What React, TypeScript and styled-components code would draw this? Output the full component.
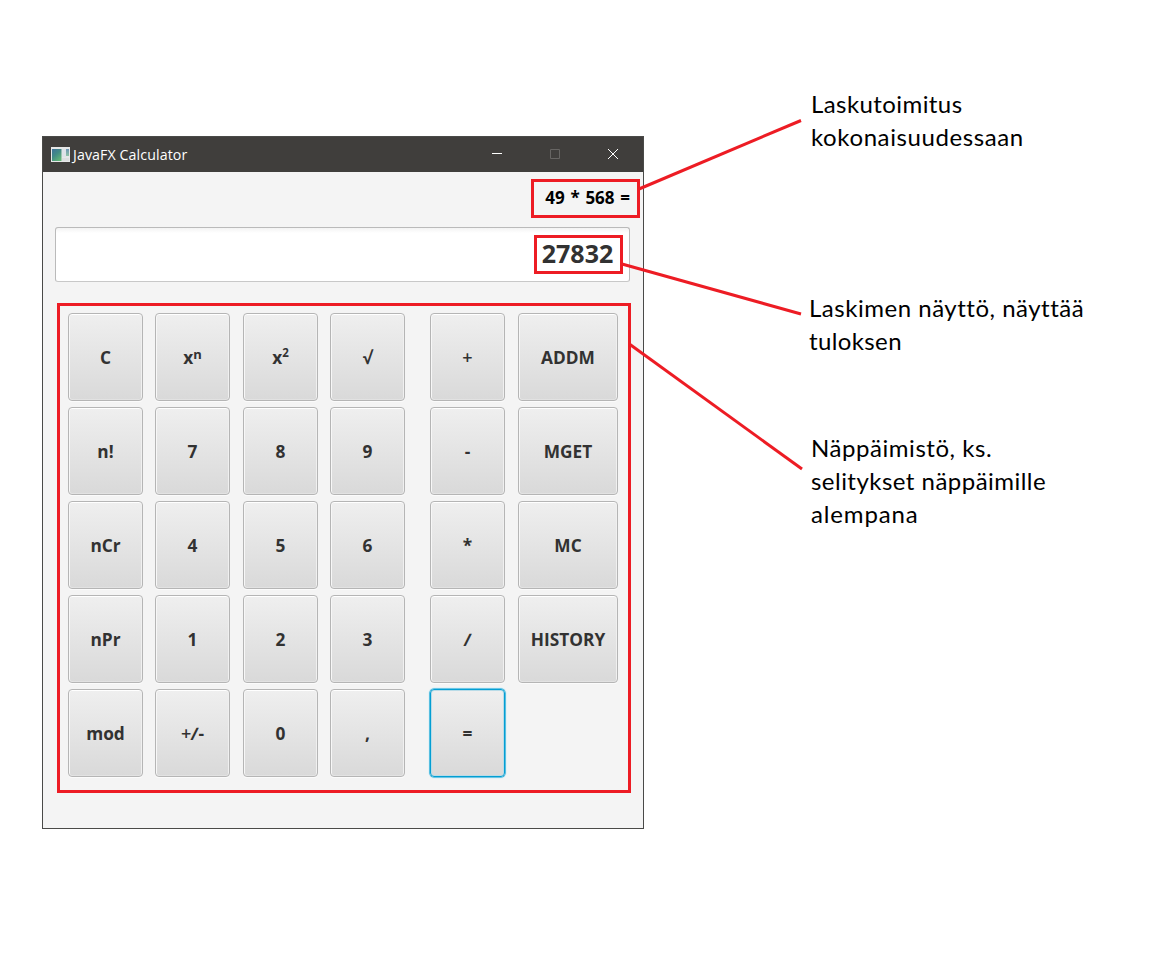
import React from 'react';
import styled, { createGlobalStyle } from 'styled-components';

const RED = '#ed1c24';
const UI = '"Open Sans", "Noto Sans", sans-serif';

const GlobalStyle = createGlobalStyle`
  *, *::before, *::after { box-sizing: border-box; }
  body { margin: 0; background: #fff; }
`;

const Page = styled.main`
  position: relative;
  display: flex;
  align-items: flex-start;
  width: 1154px;
  height: 957px;
  overflow: hidden;
  background: #fff;
`;

const Window = styled.section`
  display: flex;
  flex-direction: column;
  flex: none;
  width: 602px;
  height: 693px;
  margin: 136px 0 0 42px;
  border: 1px solid #4a4a48;
  background: #f4f4f4;
  font-family: ${UI};
`;

const TitleBar = styled.header`
  display: flex;
  align-items: center;
  flex: none;
  height: 35px;
  padding: 0 1px 1px 8px;
  background: #403e3c;
  color: #fff;
`;

const Title = styled.h1`
  flex: 1;
  margin: 0 0 0 3px;
  padding-top: 2px;
  font-size: 14.2px;
  font-weight: 400;
  line-height: 20px;
  letter-spacing: 0.1px;
`;

const WindowButton = styled.span`
  display: flex;
  align-items: center;
  justify-content: center;
  width: 58px;
  height: 34px;
`;

const ExpressionRow = styled.div`
  display: flex;
  justify-content: flex-end;
  flex: none;
  height: 55px;
  padding: 7px 3px 0 0;
`;

const Expression = styled.output`
  width: 109px;
  height: 39px;
  padding-right: 7px;
  border: 3px solid ${RED};
  color: #000;
  font-size: 17px;
  font-weight: 700;
  line-height: 31px;
  text-align: right;
  white-space: pre;
  word-spacing: 1.3px;
`;

const Display = styled.div`
  display: flex;
  justify-content: flex-end;
  flex: none;
  height: 55px;
  margin: 0 13px 0 12px;
  padding: 7px 6px 0 0;
  border: 1px solid #bababa;
  border-bottom-color: #c8c8c8;
  border-radius: 3px;
  background: linear-gradient(#f3f3f3, #fff 5px);
`;

const Result = styled.output`
  width: 89px;
  height: 39px;
  padding-right: 2px;
  border: 3px solid ${RED};
  color: #323232;
  font-size: 25px;
  font-weight: 700;
  line-height: 31px;
  text-align: center;
`;

const Keypad = styled.div`
  display: grid;
  flex: none;
  grid-template-columns: 87px 88px 87px 100px 88px 100px;
  grid-auto-rows: 88px;
  row-gap: 6px;
  width: 574px;
  height: 490px;
  margin: 21px 0 0 14px;
  padding: 7px 0 0 8px;
  border: 3px solid ${RED};
`;

const Key = styled.button<{ $wide?: boolean; $focused?: boolean }>`
  width: ${(p) => (p.$wide ? 100 : 75)}px;
  height: 88px;
  padding: 1px 0 0;
  border: 1px solid ${(p) => (p.$focused ? '#039ed3' : '#b5b5b5')};
  border-radius: 4px;
  background: linear-gradient(#efefef, #d9d9d9);
  box-shadow: ${(p) =>
    p.$focused
      ? 'inset 0 0 0 1px #b9dbe7, 0 0 0 0.6px #039ed3, 0 0 0 1.5px #d4edf5'
      : 'inset 0 1px 0 #fff, inset 1px 0 0 #f7f7f7, inset -1px 0 0 #f0f0f0, inset 0 -1px 0 #e2e2e2, 0 1px 0 #fbfbfb'};
  color: #323232;
  font: 700 17.3px/24px ${UI};
  text-align: center;
`;

const Plus = styled.span`
  font-size: 18px;
  font-weight: 600;
  line-height: 0;
`;

const Slash = styled.span`
  display: inline-block;
  transform: skewX(-7deg);
`;

const Power = styled.sup<{ $rise: number; $size: number }>`
  position: relative;
  top: -${(p) => p.$rise}px;
  font-size: ${(p) => p.$size}px;
  line-height: 0;
  vertical-align: baseline;
`;

const Notes = styled.aside`
  display: flex;
  flex-direction: column;
  flex: none;
  padding: 87px 0 0 165px;
  color: #000;
  font-family: Lato, sans-serif;
`;

const Note = styled.p<{ $gap: number; $indent: number }>`
  margin: 0 0 ${(p) => p.$gap}px ${(p) => p.$indent}px;
  font-size: 24px;
  line-height: 33px;
`;

const NoteLine = styled.span<{ $tracking: number }>`
  display: block;
  letter-spacing: ${(p) => p.$tracking}px;
  white-space: nowrap;
`;

const Pointers = styled.svg`
  position: absolute;
  inset: 0;
  pointer-events: none;
`;

const AppIcon = () => (
  <svg width="19" height="15" viewBox="0 0 19 15">
    <defs>
      <linearGradient id="screen" x1="0" y1="0" x2="0.7" y2="1">
        <stop offset="0" stopColor="#3f719c" />
        <stop offset="0.5" stopColor="#438b86" />
        <stop offset="1" stopColor="#62b577" />
      </linearGradient>
      <linearGradient id="strip" x1="0" y1="0" x2="0" y2="1">
        <stop offset="0" stopColor="#6f95b5" />
        <stop offset="1" stopColor="#8fc4a5" />
      </linearGradient>
    </defs>
    <rect width="19" height="15" fill="#e6e8e8" />
    <rect x="1" y="2" width="9.500" height="12" fill="url(#screen)" />
    <rect x="11" y="2" width="4" height="8" fill="#dfe3e8" />
    <rect x="15" y="2" width="3" height="7" fill="url(#strip)" />
    <rect x="11" y="11" width="7" height="3" fill="#dcdedf" />
  </svg>
);

const keys: { id: string; label: React.ReactNode }[] = [
  'C', 'pow', 'sq', '√', '+', 'ADDM',
  'n!', '7', '8', '9', '-', 'MGET',
  'nCr', '4', '5', '6', '*', 'MC',
  'nPr', '1', '2', '3', '/', 'HISTORY',
  'mod', '+/-', '0', ',', '=',
].map((id) => {
  if (id === 'pow') return { id, label: <>x<Power $rise={5} $size={13}>n</Power></> };
  if (id === 'sq') return { id, label: <>x<Power $rise={7} $size={11.5}>2</Power></> };
  if (id === '+') return { id, label: <Plus>+</Plus> };
  if (id === '/') return { id, label: <Slash>/</Slash> };
  if (id === '+/-') return { id, label: <><Plus>+</Plus><Slash>/</Slash>-</> };
  return { id, label: id };
});

const notes = [
  { gap: 138, indent: 2, lines: [['Laskutoimitus', 0.42], ['kokonaisuudessaan', 0.6]] },
  { gap: 74, indent: 0, lines: [['Laskimen näyttö, näyttää', 0.52], ['tuloksen', 0.38]] },
  { gap: 0, indent: 2, lines: [['Näppäimistö, ks.', 0.55], ['selitykset näppäimille', 0.47], ['alempana', 0.85]] },
] as { gap: number; indent: number; lines: [string, number][] }[];

export default function App() {
  return (
    <>
      <GlobalStyle />
      <Page>
        <Window>
          <TitleBar>
            <AppIcon />
            <Title>JavaFX Calculator</Title>
            <WindowButton>
              <svg width="10" height="10" viewBox="0 0 10 10"><path d="M0 4.5h10" stroke="#fff" /></svg>
            </WindowButton>
            <WindowButton>
              <svg width="10" height="10" viewBox="0 0 10 10"><path d="M.5.5h9v9h-9z" fill="none" stroke="#676563" /></svg>
            </WindowButton>
            <WindowButton>
              <svg width="10" height="10" viewBox="0 0 10 10"><path d="M0 0l10 10M10 0L0 10" stroke="#fff" /></svg>
            </WindowButton>
          </TitleBar>
          <ExpressionRow>
            <Expression>49 * 568 =</Expression>
          </ExpressionRow>
          <Display>
            <Result>27832</Result>
          </Display>
          <Keypad>
            {keys.map((k, i) => (
              <Key key={k.id} $wide={i % 6 === 5} $focused={k.id === '='}>
                {k.label}
              </Key>
            ))}
          </Keypad>
        </Window>
        <Notes>
          {notes.map((n) => (
            <Note key={n.lines[0][0]} $gap={n.gap} $indent={n.indent}>
              {n.lines.map(([text, tracking]) => (
                <NoteLine key={text} $tracking={tracking}>{text}</NoteLine>
              ))}
            </Note>
          ))}
        </Notes>
        <Pointers width="1154" height="957" viewBox="0 0 1154 957">
          <g stroke={RED} strokeWidth="3" fill="none">
            <path d="M639 189L801 120.500" />
            <path d="M622 264L801 314" />
            <path d="M630 344.500L802 469" />
          </g>
        </Pointers>
      </Page>
    </>
  );
}
